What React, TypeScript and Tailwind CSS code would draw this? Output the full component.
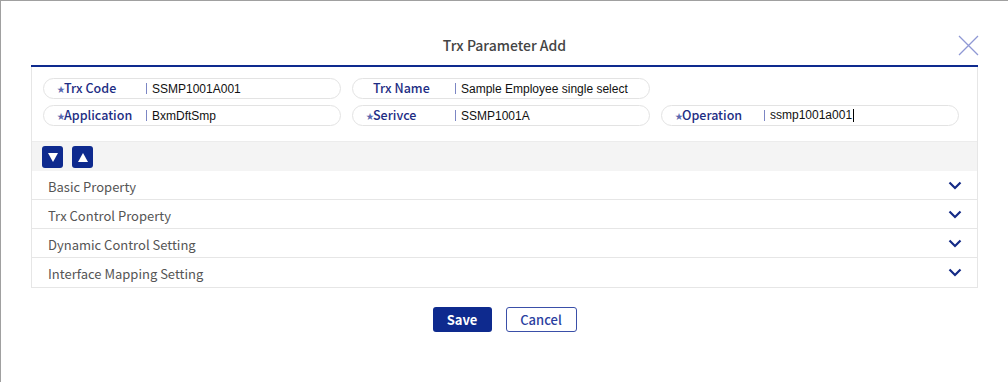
import React from "react";

const KR = { fontFamily: '"Noto Sans CJK KR", "Noto Sans", sans-serif' };
const AR = { fontFamily: '"Liberation Sans", Arial, sans-serif' };

function Field({ label, value, required = true, caret = false }: { label: string; value: string; required?: boolean; caret?: boolean }) {
  return (
    <div className="flex items-center h-[21px] w-[298px] rounded-full border border-[#e3e3e3] bg-white">
      <div className="flex items-center w-[102px] pl-[13px] shrink-0" style={KR}>
        <span className={`text-[8px] w-[7px] leading-none ${required ? "text-[#5a67b0]" : "text-transparent"}`}>★</span>
        <span className="text-[12.5px] font-medium text-[#1d2d84] leading-none">{label}</span>
      </div>
      <span className="w-px h-[11px] bg-[#7c86c4] mr-[5px]" />
      <span className="text-[12px] text-[#111] leading-none" style={AR}>
        {value}
        {caret && <span className="inline-block w-px h-[13px] bg-black align-middle ml-px" />}
      </span>
    </div>
  );
}

function Chevron() {
  return (
    <svg width="14" height="9" viewBox="0 0 14 9">
      <path d="M1.5 1.5 L7 7 L12.5 1.5" fill="none" stroke="#142a86" strokeWidth="2.2" />
    </svg>
  );
}

function Row({ label, last = false }: { label: string; last?: boolean }) {
  return (
    <div className={`flex items-center justify-between h-[29px] ${last ? "" : "border-b border-[#e6e6e6]"} pl-[16px] pr-[15px]`}>
      <span className="text-[13px] text-[#555] pt-[3px]" style={KR}>{label}</span>
      <Chevron />
    </div>
  );
}

export default function App() {
  return (
    <div className="w-[1008px] h-[382px] bg-white border-t border-l border-[#a0a0a0] overflow-hidden" style={KR}>
      <div className="ml-[30px] w-[947px]">
        <div className="relative h-[64px] flex items-end justify-center pb-[9px]">
          <span className="text-[14px] font-medium text-[#444]">Trx Parameter Add</span>
          <svg className="absolute right-[-1px] top-[34px]" width="21" height="21" viewBox="0 0 21 21">
            <path d="M1 1 L20 20 M20 1 L1 20" stroke="#8f98d4" strokeWidth="1.3" fill="none" />
          </svg>
        </div>
        <div className="h-[2px] bg-[#0e2a8e]" />
        <div className="border-l border-r border-b border-[#e6e6e6]">
          <div className="pt-[11px] pb-[15px] pl-[11px] flex flex-col gap-[6px]">
            <div className="flex gap-[11px]">
              <Field label="Trx Code" value="SSMP1001A001" />
              <Field label="Trx Name" value="Sample Employee single select" required={false} />
            </div>
            <div className="flex gap-[11px]">
              <Field label="Application" value="BxmDftSmp" />
              <Field label="Serivce" value="SSMP1001A" />
              <Field label="Operation" value="ssmp1001a001" caret />
            </div>
          </div>
          <div className="h-[30px] bg-[#f4f4f4] border-t border-[#ececec] flex items-start gap-[9px] pl-[10px] pt-[4px]">
            <button className="w-[21px] h-[22px] rounded-[3px] bg-[#0e2a8e] flex items-center justify-center">
              <svg width="10" height="9" viewBox="0 0 10 9"><path d="M0 0 H10 L5 9 Z" fill="#fff" /></svg>
            </button>
            <button className="w-[21px] h-[22px] rounded-[3px] bg-[#0e2a8e] flex items-center justify-center">
              <svg width="10" height="9" viewBox="0 0 10 9"><path d="M0 9 H10 L5 0 Z" fill="#fff" /></svg>
            </button>
          </div>
          <Row label="Basic Property" />
          <Row label="Trx Control Property" />
          <Row label="Dynamic Control Setting" />
          <Row label="Interface Mapping Setting" last />
        </div>
      </div>
      <div className="flex justify-center gap-[14px] mt-[19px]">
        <button className="w-[59px] h-[25px] rounded-[3px] bg-[#0e2a8e] text-white text-[13px] font-semibold" style={KR}>Save</button>
        <button className="w-[71px] h-[25px] rounded-[3px] bg-white border border-[#3a4fa8] text-[#2b3f9f] text-[13px] font-medium" style={KR}>Cancel</button>
      </div>
    </div>
  );
}
